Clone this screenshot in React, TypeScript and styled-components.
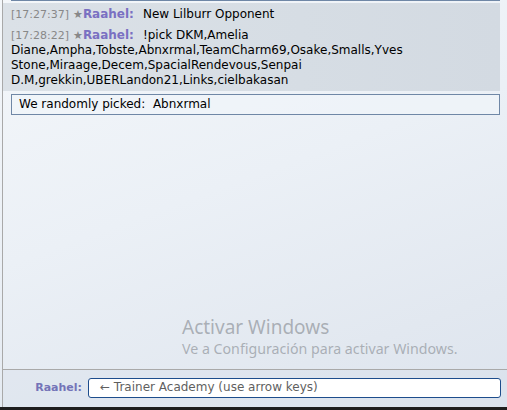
import React from 'react'
import styled, { createGlobalStyle } from 'styled-components';

const GlobalStyle = createGlobalStyle`
  html, body {
    margin: 0;
    padding: 0;
  }
  body {
    width: 507px;
    height: 410px;
    overflow: hidden;
    font-family: "DejaVu Sans", Verdana, sans-serif;
    font-size: 12px;
    color: #000;
  }
`;

const Page = styled.div`
  position: relative;
  width: 507px;
  height: 410px;
  display: flex;
  flex-direction: column;
  background: linear-gradient(160deg, #f4f7fa 0%, #ebf0f6 45%, #e2e8f0 80%, #dde4ee 100%);
`;

const Main = styled.div`
  flex: 1;
  display: flex;
  flex-direction: column;
  margin-left: 2px;
  border-left: 1px solid #a9a9a9;
  min-height: 0;
`;

const ChatLog = styled.div`
  flex: 1;
  padding-right: 7px;
  overflow: hidden;
`;

const PrevBoxTail = styled.div`
  margin-left: 8px;
  border-bottom: 1px solid #6f87a6;
  margin-bottom: 2px;
`;

const MessageGroup = styled.div`
  padding-top: 1px;
  background: linear-gradient(90deg, #dbe1e7 0%, #d6dde4 60%, #d3dae2 100%);
`;

const Message = styled.div`
  padding: 3px 6px 3px 8px;
  line-height: 15px;
`;

const Time = styled.small`
  font-size: 11px;
  line-height: 15px;
  color: #888;
`;

const Name = styled.strong`
  color: #7a70c2;
  margin-left: 4px;
  margin-right: 9px;
`;

const Star = styled.small`
  font-size: 11px;
  line-height: 15px;
  font-weight: normal;
  color: #888;
`;

const Infobox = styled.div`
  margin: 3px 0 0 8px;
  border: 1px solid #6f87a6;
  background: rgba(240, 245, 250, 0.6);
  padding: 2px 7px;
  line-height: 15px;
`;

const BottomBar = styled.div`
  height: 38px;
  border-top: 1px solid #a9a9a9;
  display: flex;
  align-items: flex-start;
  padding-top: 8px;
  box-sizing: border-box;
  gap: 6px;
  background: rgba(215, 224, 236, 0.35);
`;

const Label = styled.label`
  width: 79px;
  text-align: right;
  font-size: 11px;
  font-weight: bold;
  color: #7474b8;
  line-height: 20px;
`;

const Input = styled.div`
  width: 413px;
  height: 20px;
  box-sizing: border-box;
  border: 1.5px solid #1d4d8c;
  border-radius: 3px;
  background: #fff;
  color: #5f5f5f;
  font-size: 12px;
  line-height: 17px;
  padding-left: 11px;
`;

const Taskbar = styled.div`
  height: 3px;
  background: #1e1e1e;
`;

const Watermark = styled.div`
  position: absolute;
  left: 182px;
  top: 315px;
  font-family: "Noto Sans", "Open Sans", sans-serif;
  color: rgba(150, 155, 162, 0.75);
  pointer-events: none;
`;

const WatermarkTitle = styled.div`
  font-size: 19px;
  line-height: 25px;
`;

const WatermarkText = styled.div`
  font-size: 14.2px;
  line-height: 18px;
`;

const MESSAGES = [
  { time: '17:27:37', name: 'Raahel', text: 'New Lilburr Opponent' },
  {
    time: '17:28:22',
    name: 'Raahel',
    text: '!pick DKM,Amelia Diane,Ampha,Tobste,Abnxrmal,TeamCharm69,Osake,Smalls,Yves Stone,Miraage,Decem,SpacialRendevous,Senpai D.M,grekkin,UBERLandon21,Links,cielbakasan',
  },
];

function App() {
  return (
    <Page>
      <GlobalStyle />
      <Main>
        <ChatLog>
          <PrevBoxTail />
          <MessageGroup>
            {MESSAGES.map((m) => (
              <Message key={m.time}>
                <Time>[{m.time}]</Time>
                <Name><Star>★</Star>{m.name}:</Name>
                {m.text}
              </Message>
            ))}
          </MessageGroup>
          <Infobox>We randomly picked:&nbsp; Abnxrmal</Infobox>
        </ChatLog>
        <BottomBar>
          <Label>Raahel:</Label>
          <Input>← Trainer Academy (use arrow keys)</Input>
        </BottomBar>
      </Main>
      <Taskbar />
      <Watermark>
        <WatermarkTitle>Activar Windows</WatermarkTitle>
        <WatermarkText>Ve a Configuración para activar Windows.</WatermarkText>
      </Watermark>
    </Page>
  )
}

export default App
